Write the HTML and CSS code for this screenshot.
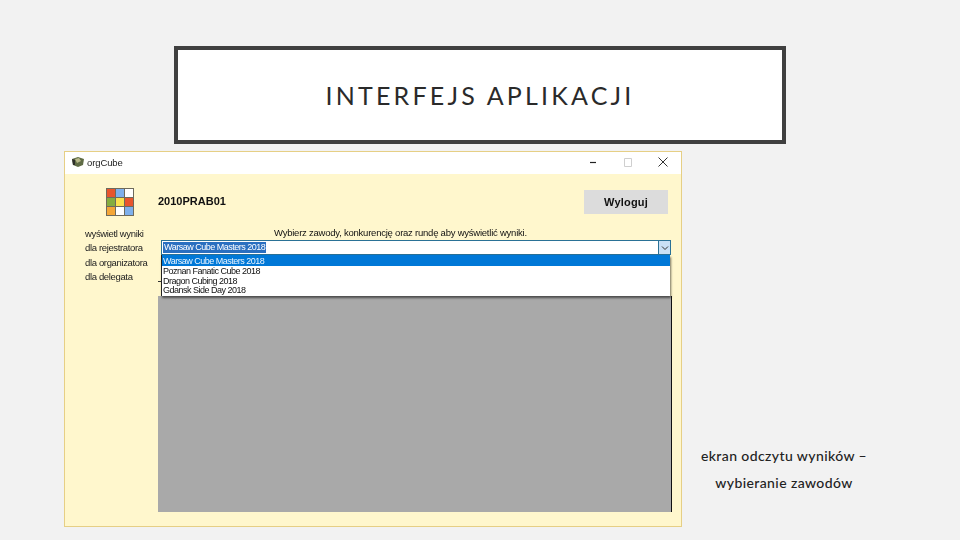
FILE: index.html
```html
<!DOCTYPE html>
<html lang="pl">
<head>
  <meta charset="UTF-8">
  <meta name="viewport" content="width=device-width, initial-scale=1.0">
  <title>Interfejs aplikacji</title>
  <link rel="stylesheet" href="styles.css">
</head>
<body>
  <div id="slide">
    <div id="slide-title">INTERFEJS APLIKACJI</div>
    <div id="slide-row">
      <div id="window">
        <div id="titlebar">
          <svg class="app-icon" width="14" height="12" viewBox="0 0 14 12">
            <path d="M1 3 L7 1 L13 3 L12 9 L7 11 L2 9 Z" fill="#5f6b45"/>
            <path d="M4 3 L8 2 L10 5 L6 7 Z" fill="#b9b98a"/>
            <path d="M1 3 L4 4 L4 9 L2 9 Z" fill="#2e2e2a"/>
          </svg>
          <span class="app-name">orgCube</span>
          <div id="win-buttons">
            <svg width="12" height="12" viewBox="0 0 12 12"><path d="M3 6.5 H9" stroke="#222" stroke-width="1.2"/></svg>
            <svg width="12" height="12" viewBox="0 0 12 12"><path d="M2.5 2.5 H9.5 V10.5 H2.5 Z" fill="none" stroke="#cfcfcf"/></svg>
            <svg width="12" height="12" viewBox="0 0 12 12"><path d="M1.5 1.5 L10.5 10.5 M10.5 1.5 L1.5 10.5" stroke="#333" stroke-width="1"/></svg>
          </div>
        </div>
        <div id="win-body">
          <div id="side">
            <div class="cube">
              <i class="c-red"></i><i class="c-blue"></i><i class="c-white"></i>
              <i class="c-green"></i><i class="c-yellow"></i><i class="c-red"></i>
              <i class="c-orange"></i><i class="c-white"></i><i class="c-blue"></i>
            </div>
            <div class="side-nav">
              <div>wyświetl wyniki</div>
              <div>dla rejestratora</div>
              <div>dla organizatora</div>
              <div>dla delegata</div>
            </div>
          </div>
          <div id="main">
            <div id="main-head">
              <span class="user-id">2010PRAB01</span>
              <button id="logout-btn">Wyloguj</button>
            </div>
            <div class="prompt">Wybierz zawody, konkurencję oraz rundę aby wyświetlić wyniki.</div>
            <div id="combo">
              <div id="combo-box">
                <span class="combo-value">Warsaw Cube Masters 2018</span>
                <span class="combo-arrow">
                  <svg width="8" height="6" viewBox="0 0 8 6"><path d="M1 1.5 L4 4.5 L7 1.5" fill="none" stroke="#333"/></svg>
                </span>
              </div>
              <div id="combo-list">
                <div class="combo-item selected">Warsaw Cube Masters 2018</div>
                <div class="combo-item">Poznan Fanatic Cube 2018</div>
                <div class="combo-item">Dragon Cubing 2018</div>
                <div class="combo-item">Gdansk Side Day 2018</div>
              </div>
            </div>
            <div id="results"></div>
          </div>
        </div>
      </div>
      <div id="caption">
        <div>ekran odczytu wyników –</div>
        <div>wybieranie zawodów</div>
      </div>
    </div>
  </div>
</body>
</html>
```

FILE: styles.css
```css
html, body {
  margin: 0;
  height: 100%;
  overflow: hidden;
}

body {
  background-color: #f2f2f2;
  font-family: 'Liberation Sans', sans-serif;
}

#slide {
  width: 960px;
  height: 540px;
  padding-top: 46px;
  box-sizing: border-box;
}

#slide-title {
  width: 612px;
  height: 98px;
  margin-left: 174px;
  box-sizing: border-box;
  border: 4px solid #404040;
  background-color: #fff;
  color: #2a2a2a;
  font-family: 'Lato', sans-serif;
  font-size: 25px;
  font-weight: 400;
  letter-spacing: 3.2px;
  line-height: 90px;
  text-align: center;
}

#slide-row {
  display: flex;
  margin-top: 7px;
  padding-left: 64px;
}

#window {
  width: 618px;
  height: 376px;
  box-sizing: border-box;
  border: 1px solid #e6cf85;
  background-color: #fff7cd;
  display: flex;
  flex-direction: column;
  filter: blur(0.45px);
}

#titlebar {
  height: 22px;
  flex: none;
  background-color: #fff;
  display: flex;
  align-items: center;
  padding: 0 0 2px 6px;
  box-sizing: border-box;
  font-size: 9.5px;
  letter-spacing: -0.1px;
  color: #222;
}

.app-name {
  margin-left: 2px;
}

#win-buttons {
  margin-left: auto;
  display: flex;
  gap: 23px;
  padding-right: 12px;
}

#win-body {
  flex: 1;
  display: flex;
}

#side {
  width: 93px;
  flex: none;
}

.cube {
  display: grid;
  grid-template-columns: repeat(3, 8px);
  grid-auto-rows: 8px;
  gap: 1px;
  width: 26px;
  margin: 14px 0 0 41px;
  padding: 1px;
  background-color: #6e6a5c;
}

.cube i { display: block; }
.c-red { background-color: #e8552d; }
.c-blue { background-color: #7fb0ec; }
.c-white { background-color: #fff; }
.c-green { background-color: #86ad3f; }
.c-yellow { background-color: #fbe14f; }
.c-orange { background-color: #f4a638; }

.side-nav {
  margin: 11px 0 0 20px;
  font-size: 9.5px;
  letter-spacing: -0.35px;
  line-height: 14.4px;
  color: #222;
  white-space: nowrap;
}

#main {
  width: 513px;
  display: flex;
  flex-direction: column;
}

#main-head {
  height: 52px;
  display: flex;
  align-items: flex-start;
  justify-content: space-between;
  padding-right: 3px;
}

.user-id {
  margin-top: 21px;
  font-size: 11px;
  font-weight: bold;
  color: #111;
}

#logout-btn {
  width: 84px;
  height: 24px;
  margin-top: 16px;
  border: none;
  background-color: #dcdcdc;
  color: #111;
  font-family: inherit;
  font-size: 11px;
  font-weight: bold;
  letter-spacing: 0.2px;
}

.prompt {
  height: 14px;
  margin-left: 116px;
  font-size: 9.5px;
  letter-spacing: -0.23px;
  line-height: 13px;
  color: #111;
  white-space: nowrap;
}

#combo {
  position: relative;
  height: 56px;
  margin-left: 3px;
}

#combo-box {
  height: 15px;
  box-sizing: border-box;
  border: 1px solid #2a7196;
  background-color: #fff;
  display: flex;
  align-items: center;
  justify-content: space-between;
  font-size: 9px;
  letter-spacing: -0.5px;
  color: #fff;
}

.combo-value {
  margin-left: 1px;
  padding: 0 1px;
  background-color: #2a6fc0;
  line-height: 11px;
}

.combo-arrow {
  width: 11px;
  height: 13px;
  background-color: #c9e0f5;
  border-left: 1px solid #2a7196;
  display: flex;
  align-items: center;
  justify-content: center;
}

#combo-list {
  position: absolute;
  top: 15px;
  left: 0;
  right: 1px;
  height: 41px;
  box-sizing: border-box;
  background-color: #fff;
  border-left: 1px solid #222;
  box-shadow: 1px 2px 2px rgba(0, 0, 0, 0.55);
  font-size: 9px;
  letter-spacing: -0.5px;
  color: #111;
}

#combo-list::before {
  content: "";
  position: absolute;
  left: -4px;
  top: 26px;
  width: 3px;
  height: 1px;
  background-color: #333;
}

.combo-item {
  height: 9.7px;
  line-height: 11px;
  padding-left: 1px;
  white-space: nowrap;
}

.combo-item.selected {
  height: 11px;
  line-height: 12px;
  background-color: #0078d7;
  color: #e8f4ff;
}

#results {
  height: 216px;
  margin-right: -1px;
  background-color: #a9a9a9;
  border-right: 1px solid #111;
}

#caption {
  width: 220px;
  margin-left: -8px;
  padding-top: 291px;
  font-family: 'Lato', sans-serif;
  font-size: 14px;
  font-weight: 500;
  letter-spacing: 0.4px;
  line-height: 27px;
  color: #222;
  text-align: center;
  white-space: nowrap;
}
```
